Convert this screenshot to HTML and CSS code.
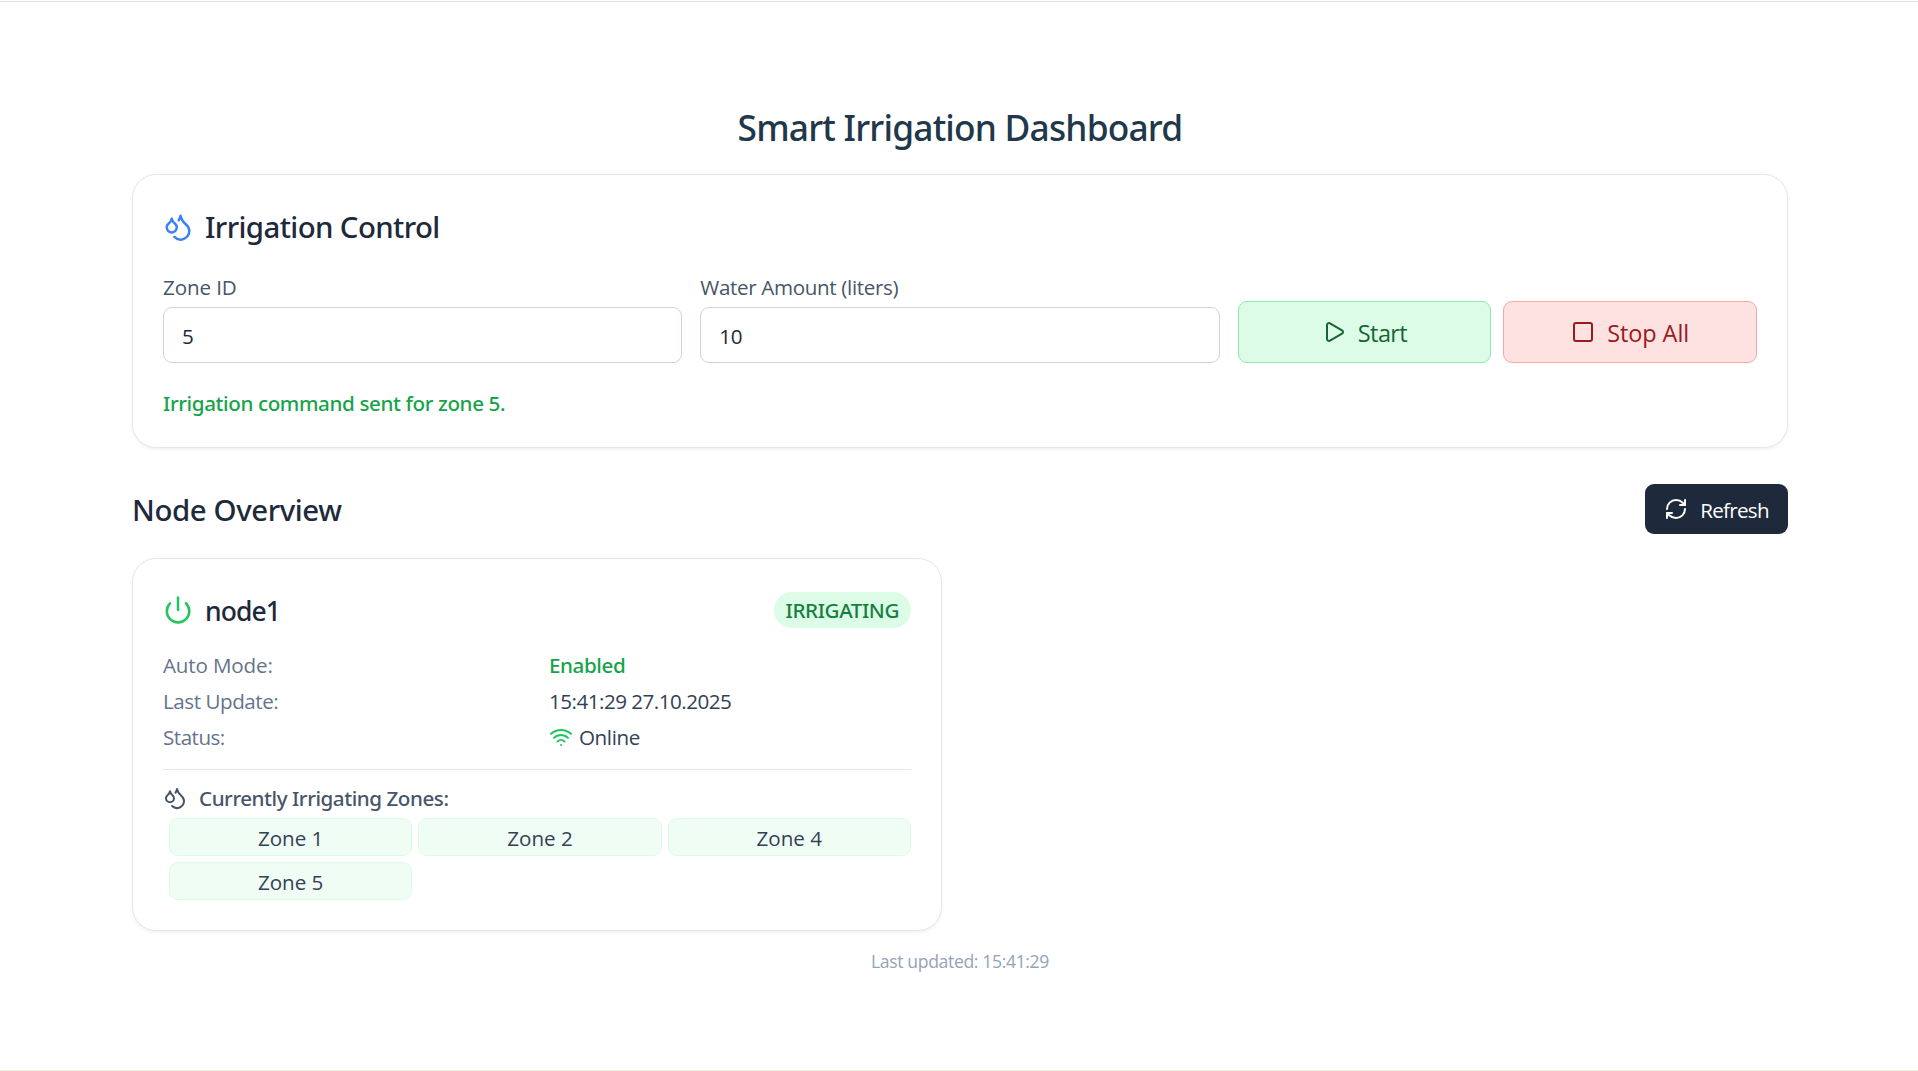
FILE: index.html
```html
<!DOCTYPE html>
<html lang="en">
<head>
<meta charset="utf-8">
<title>Smart Irrigation Dashboard</title>
<link rel="stylesheet" href="styles.css">
</head>
<body>
<svg class="sprite" aria-hidden="true">
  <symbol id="droplets" viewBox="0 0 24 24">
    <path d="M7 16.3c2.2 0 4-1.83 4-4.05 0-1.16-.57-2.26-1.71-3.19S7.29 6.75 7 5.3c-.29 1.45-1.14 2.84-2.29 3.76S3 11.1 3 12.25c0 2.22 1.8 4.05 4 4.05z"/>
    <path d="M12.56 6.6A10.97 10.97 0 0 0 14 3.02c.5 2.5 2 4.9 4 6.5s3 3.5 3 5.5a6.98 6.98 0 0 1-11.91 4.97"/>
  </symbol>
</svg>
<main class="page">
  <h1 class="page-title">Smart Irrigation Dashboard</h1>

  <section class="card control">
    <h2 class="section-title control-title">
      <svg class="icon icon-lg blue"><use href="#droplets"/></svg>
      <span>Irrigation Control</span>
    </h2>
    <div class="form">
      <div class="field">
        <label class="label label-zone" for="zone">Zone ID</label>
        <input class="input" id="zone" type="text" value="5">
      </div>
      <div class="field">
        <label class="label label-amount" for="amount">Water Amount (liters)</label>
        <input class="input" id="amount" type="text" value="10">
      </div>
      <div class="actions">
        <button class="btn btn-start">
          <svg class="icon icon-md" viewBox="0 0 24 24"><path d="M5 5a2 2 0 0 1 3.008-1.728l11.997 6.998a2 2 0 0 1 .003 3.458l-12 7A2 2 0 0 1 5 19z"/></svg>
          <span>Start</span>
        </button>
        <button class="btn btn-stop">
          <svg class="icon icon-md" viewBox="0 0 24 24"><rect x="3" y="3" width="18" height="18" rx="2"/></svg>
          <span>Stop All</span>
        </button>
      </div>
    </div>
    <p class="message">Irrigation command sent for zone 5.</p>
  </section>

  <div class="overview-bar">
    <h2 class="section-title overview-title"><span>Node Overview</span></h2>
    <button class="refresh">
      <svg class="icon icon-md" viewBox="0 0 24 24"><path d="M3 12a9 9 0 0 1 9-9 9.75 9.75 0 0 1 6.74 2.74L21 8"/><path d="M21 3v5h-5"/><path d="M21 12a9 9 0 0 1-9 9 9.75 9.75 0 0 1-6.74-2.74L3 16"/><path d="M8 16H3v5"/></svg>
      <span>Refresh</span>
    </button>
  </div>

  <div class="nodes">
    <article class="card node">
      <header class="node-head">
        <h3 class="node-name">
          <svg class="icon icon-lg green" viewBox="0 0 24 24"><path d="M12 2v10"/><path d="M18.4 6.6a9 9 0 1 1-12.77.04"/></svg>
          <span>node1</span>
        </h3>
        <span class="badge">IRRIGATING</span>
      </header>
      <dl class="facts">
        <dt class="key-mode">Auto Mode:</dt><dd class="enabled">Enabled</dd>
        <dt class="key-update">Last Update:</dt><dd class="stamp">15:41:29 27.10.2025</dd>
        <dt class="key-status">Status:</dt>
        <dd class="online">
          <svg class="icon icon-md green" viewBox="0 0 24 24"><path d="M12 20h.01"/><path d="M2 8.82a15 15 0 0 1 20 0"/><path d="M5 12.859a10 10 0 0 1 14 0"/><path d="M8.5 16.429a5 5 0 0 1 7 0"/></svg>
          <span>Online</span>
        </dd>
      </dl>
      <div class="active">
        <h4 class="active-title">
          <svg class="icon icon-md"><use href="#droplets"/></svg>
          <span>Currently Irrigating Zones:</span>
        </h4>
        <ul class="zones">
          <li>Zone 1</li>
          <li>Zone 2</li>
          <li>Zone 4</li>
          <li>Zone 5</li>
        </ul>
      </div>
    </article>
  </div>

  <footer class="updated">Last updated: 15:41:29</footer>
</main>
</body>
</html>
```
FILE: styles.css
```css
* { box-sizing: border-box; }

body {
  margin: 0;
  background: #fff;
  color: #334155;
  font-family: "Open Sans", "Noto Sans", sans-serif;
  font-size: 20.6px;
}

h1, h2, h3, h4, p, dl, dd, ul { margin: 0; padding: 0; }
h1, h2, h3, h4, .message, .badge, .enabled {
  font-family: "Noto Sans", "Open Sans", sans-serif;
  font-weight: 530;
}
ul { list-style: none; }
button, input { font: inherit; }

.sprite { display: none; }

.page {
  min-height: 1071px;
  padding: 105px 130px 0 132px;
  border-bottom: 1px solid #f3f5dc;
  background: linear-gradient(#e0e0e0, #e0e0e0) 0 1px / 100% 1px no-repeat;
}

.page-title {
  height: 44px;
  line-height: 45px;
  margin-bottom: 25px;
  text-align: center;
  font-size: 35.3px;
  letter-spacing: -0.8px;
  color: #21374a;
}

.card {
  padding: 30px;
  border: 1px solid #e2e8f0;
  border-radius: 24px;
  background: #fff;
  box-shadow: 0 1.5px 3px rgba(0, 0, 0, 0.05);
}

.icon {
  flex: none;
  fill: none;
  stroke: currentColor;
  stroke-width: 2;
  stroke-linecap: round;
  stroke-linejoin: round;
}
.icon-lg { width: 30px; height: 30px; }
.icon-md { width: 24px; height: 24px; }
.blue { color: #3b82f6; }
.green { color: #22c55e; }

.section-title {
  display: flex;
  align-items: center;
  gap: 12px;
  height: 43px;
  line-height: 41px;
  font-size: 29.4px;
  color: #1e293b;
}
.section-title span { padding-top: 2px; }
.control-title { margin-bottom: 24px; letter-spacing: -0.6px; }
.overview-title { letter-spacing: -0.4px; }

.form {
  display: grid;
  grid-template-columns: repeat(3, 1fr);
  gap: 18px;
  align-items: end;
}
.label {
  display: block;
  height: 30px;
  line-height: 30px;
  margin-bottom: 5px;
  color: #475569;
}
.label-zone { letter-spacing: -0.1px; }
.label-amount { letter-spacing: -0.35px; }
.input {
  display: block;
  width: 100%;
  height: 56px;
  padding: 2px 18px 0;
  border: 1px solid #cbd5e1;
  border-radius: 9px;
  background: #fff;
  color: #1e293b;
  letter-spacing: -0.3px;
}

.actions { display: grid; grid-template-columns: 1fr 1fr; gap: 12px; }
.btn {
  display: flex;
  align-items: center;
  justify-content: center;
  gap: 12px;
  height: 62px;
  padding: 0;
  border: 1px solid;
  border-radius: 9px;
  font-size: 23.5px;
}
.btn span { padding-top: 2px; }
.btn-start { background: #dcfce7; border-color: #86efac; color: #166534; letter-spacing: -0.6px; }
.btn-stop { background: #fee2e2; border-color: #fca5a5; color: #991b1b; letter-spacing: -0.1px; }

.message {
  margin-top: 25px;
  height: 29px;
  line-height: 31px;
  letter-spacing: -0.38px;
  color: #16a34a;
}

.overview-bar {
  display: flex;
  align-items: center;
  justify-content: space-between;
  margin: 36px 0 24px;
}
.refresh {
  display: flex;
  align-items: center;
  justify-content: center;
  gap: 12px;
  width: 143px;
  height: 50px;
  padding: 0;
  border: 0;
  border-radius: 9px;
  background: #1e293b;
  color: #fff;
  letter-spacing: -0.7px;
}
.refresh span { padding-top: 1px; }

.nodes { display: grid; grid-template-columns: 1fr 1fr; gap: 36px; }

.node-head {
  display: flex;
  align-items: center;
  justify-content: space-between;
  height: 42px;
  margin-bottom: 19px;
}
.node-name {
  display: flex;
  align-items: center;
  gap: 12px;
  font-size: 26.5px;
  letter-spacing: -0.9px;
  color: #1e293b;
}
.node-name span { padding-top: 1px; }
.badge {
  padding: 0 12px;
  border-radius: 18px;
  line-height: 36px;
  background: #dcfce7;
  color: #15803d;
  letter-spacing: -0.4px;
}

.facts {
  display: grid;
  grid-template-columns: 1fr 1fr;
  gap: 6px 24px;
  line-height: 30px;
}
.facts dt { color: #64748b; }
.key-mode { letter-spacing: -0.15px; }
.key-update { letter-spacing: -0.45px; }
.key-status { letter-spacing: -0.5px; }
.enabled { color: #16a34a; letter-spacing: -0.4px; }
.stamp { letter-spacing: -0.5px; }
.online {
  display: flex;
  align-items: center;
  gap: 6px;
  height: 30px;
  letter-spacing: -0.4px;
}

.active {
  margin-top: 17px;
  padding-top: 13px;
  border-top: 1px solid #e2e8f0;
}
.active-title {
  display: flex;
  align-items: center;
  gap: 12px;
  height: 30px;
  margin-bottom: 5px;
  font-size: 20.6px;
  letter-spacing: -0.44px;
  color: #475569;
}
.zones {
  display: grid;
  grid-template-columns: repeat(3, 1fr);
  gap: 6px;
  padding-left: 6px;
}
.zones li {
  height: 38px;
  line-height: 38px;
  border: 1px solid #dcfce7;
  border-radius: 9px;
  background: #f0fdf4;
  text-align: center;
}

.updated {
  margin-top: 18px;
  line-height: 24px;
  text-align: center;
  font-size: 17.6px;
  letter-spacing: -0.36px;
  color: #94a3b8;
}
```
